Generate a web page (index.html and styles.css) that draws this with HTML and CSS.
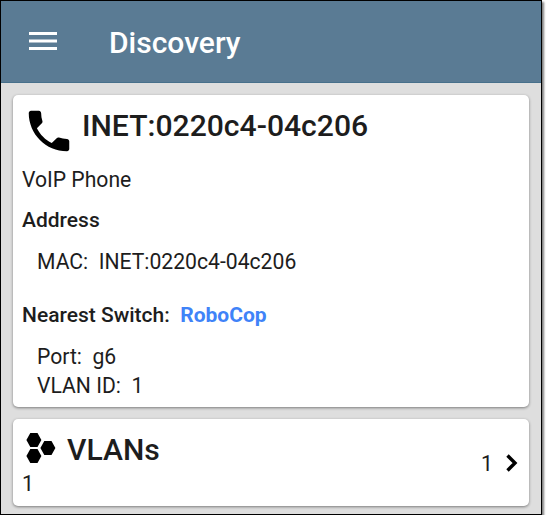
FILE: index.html
```html
<!DOCTYPE html>
<html lang="en">

<head>
    <meta charset="UTF-8">
    <meta name="viewport" content="width=device-width, initial-scale=1.0">
    <title>Discovery</title>
    <link rel="stylesheet" href="styles.css">
</head>

<body>
    <div class="app">
        <header class="toolbar">
            <svg class="menu-icon" width="28" height="20" viewBox="0 0 28 20">
                <path d="M0 1h28v3H0zM0 8.5h28v3H0zM0 16h28v3H0z" fill="#fff" />
            </svg>
            <h1>Discovery</h1>
        </header>

        <main class="content">
            <section class="card device">
                <div class="card-title">
                    <svg class="phone-icon" width="54" height="54" viewBox="0 0 24 24">
                        <path d="M6.62 10.79c1.44 2.83 3.76 5.14 6.59 6.59l2.2-2.2c.27-.27.67-.36 1.02-.24 1.12.37 2.33.57 3.57.57.55 0 1 .45 1 1V20c0 .55-.45 1-1 1-9.39 0-17-7.61-17-17 0-.55.45-1 1-1h3.5c.55 0 1 .45 1 1 0 1.25.2 2.45.57 3.57.11.35.03.74-.25 1.02l-2.2 2.2z" />
                    </svg>
                    <h2>INET:0220c4-04c206</h2>
                </div>
                <p class="type">VoIP Phone</p>
                <h3>Address</h3>
                <div class="details">
                    <p>MAC:&nbsp; INET:0220c4-04c206</p>
                </div>
                <h3 class="switch">Nearest Switch:&nbsp; <a href="#">RoboCop</a></h3>
                <div class="details">
                    <p>Port:&nbsp; g6</p>
                    <p>VLAN ID:&nbsp; 1</p>
                </div>
            </section>

            <section class="card vlans">
                <div class="vlans-info">
                    <div class="card-title">
                        <svg class="vlan-icon" width="30" height="32" viewBox="0 0 30 32">
                            <path d="M4.3 1h7.2l3.9 7-3.9 7H4.3L.4 8zM18.3 9h7.2l3.9 7-3.9 7h-7.2l-3.9-7zM4.3 17h7.2l3.9 7-3.9 7H4.3L.4 24z" />
                        </svg>
                        <h2>VLANs</h2>
                    </div>
                    <p>1</p>
                </div>
                <span class="count">1</span>
                <svg class="chevron" width="12" height="18" viewBox="0 0 12 18">
                    <path d="M1.5 1.5L9 9l-7.5 7.5" fill="none" stroke="#000" stroke-width="3.4" />
                </svg>
            </section>
        </main>
    </div>
</body>

</html>
```

FILE: styles.css
```css
* {
    box-sizing: border-box;
}

body {
    margin: 0;
    background-color: #fff;
    color: #1d1d1d;
    font-family: Roboto, "Liberation Sans", sans-serif;
    font-size: 21.15px;
}

h1,
h2,
h3,
p {
    margin: 0;
    font-weight: 500;
}

p {
    font-weight: 400;
    line-height: 28px;
}

.app {
    width: 542px;
    height: 515px;
    border: 1px solid #000;
    background-color: #dedede;
    box-shadow: 2px 2px 2px rgba(0, 0, 0, 0.5);
}

.toolbar {
    display: flex;
    align-items: center;
    height: 82px;
    padding-left: 28px;
    border-bottom: 1px solid #47708b;
    background-color: #5a7b94;
    color: #fff;
}

.menu-icon {
    margin-bottom: 1px;
}

.toolbar h1 {
    margin: 2px 0 0 52px;
    font-size: 30px;
    line-height: 36px;
}

.content {
    display: flex;
    flex-direction: column;
    gap: 12px;
    padding: 12px;
}

.card {
    padding: 9px;
    border-radius: 5px;
    background-color: #fff;
    box-shadow: 0 1px 3px rgba(0, 0, 0, 0.45);
}

.card-title {
    display: flex;
}

.card-title h2 {
    font-size: 30.1px;
    line-height: 36px;
}

.device {
    height: 312px;
}

.device h2 {
    margin: 4px 0 0 6px;
}

.phone-icon {
    margin-bottom: 8px;
}

h3 {
    margin-top: 12px;
    font-size: 21px;
    line-height: 28px;
}

.details {
    margin-top: 14px;
    padding-left: 15px;
}

.details p + p {
    margin-top: 1px;
}

.switch {
    margin-top: 25px;
}

.switch a {
    color: #3f83f8;
    font-weight: 700;
    text-decoration: none;
}

.vlans {
    display: flex;
    align-items: center;
    height: 87px;
}

.vlans-info {
    flex: 1;
    padding-top: 4px;
}

.vlan-icon {
    margin: 1px 11px 0 4px;
}

.vlans h2 {
    margin: 1px 0 2px;
}

.count {
    padding-top: 1px;
}

.chevron {
    margin: 0 2px 0 13px;
}
```
